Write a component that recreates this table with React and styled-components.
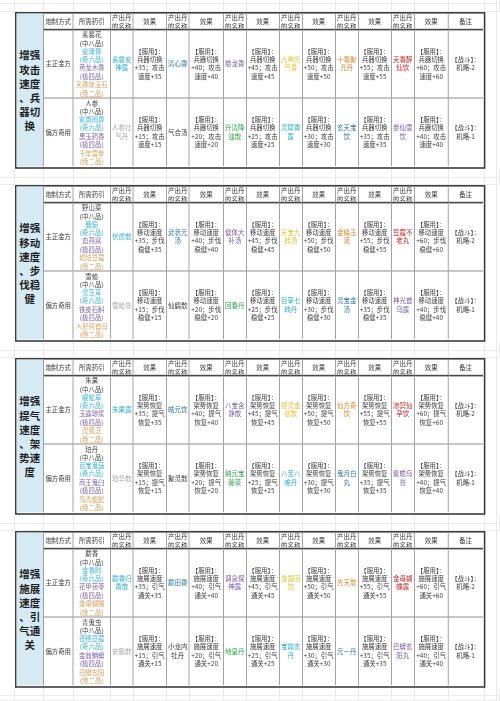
import React from "react";
import styled, { createGlobalStyle } from "styled-components";

const GlobalStyle = createGlobalStyle`
  html, body { margin: 0; padding: 0; background: #ffffff; }
  body { font-family: "Noto Sans CJK SC", "Noto Sans", sans-serif; }
`;

/* The table is laid out at 1.25x and scaled down to 0.8, so that the very small
   text of the reference renders at its true size. */
const K = 1.25;
const OUTER = [29, 30, 37, 23, 33, 23, 34, 23, 33, 23, 33, 23, 33, 23, 34, 36];
const INNER = [27, 30, 37, 23, 33, 23, 34, 23, 33, 23, 33, 23, 33, 23, 34, 34];
const GAP_TEMPLATE = `15px ${OUTER.map((w) => `${w}px`).join(" ")} 12px 1fr`;
const GAP_CELLS = OUTER.length + 3;

const COLORS = {
  dark: "#3a3a3a",
  cyan: "#2aaed3",
  blue: "#2f77b2",
  purple: "#7c58a6",
  yellow: "#e2c637",
  orange: "#e08a30",
  red: "#c61f24",
  gray: "#a9a9a9",
  green: "#2fa64c",
};

const GRADE = [
  { label: "中八品", color: "#3f3f3f" },
  { label: "奇六品", color: "#3bb5dc" },
  { label: "极四品", color: "#8063ab" },
  { label: "绝二品", color: "#d9a05a" },
];

const ROW1_COLORS = ["cyan", "blue", "purple", "yellow", "orange", "red"];
const ROW2_COLORS = ["gray", "dark", "green", "cyan", "blue", "purple"];

const SECTIONS = [
  {
    title: ["增强", "攻击", "速度", "、兵", "器切", "换"],
    effA: "兵器切换",
    effB: ["攻击", "速度"],
    rows: [
      {
        method: "主正金方",
        ingredients: ["素馨花", "安魂香", "黄龙木香", "天香琼玉石"],
        names: ["素馨安神露", "清心香", "慈龙香", "六神元气香", "十香聚元丹", "天香醉仙饮"],
      },
      {
        method: "偏方奇用",
        ingredients: ["人参", "紫香雨香", "黑玉药香", "千年雪参"],
        names: ["人参壮气丹", "气合汤", "升清降浊散", "灵犀香露", "玄天宝饮", "参仙雪饮"],
      },
    ],
  },
  {
    title: ["增强", "移动", "速度", "、步", "伐稳", "健"],
    effA: "移动速度",
    effB: ["步伐", "稳健"],
    rows: [
      {
        method: "主正金方",
        ingredients: ["野山菜", "鹿筋", "血燕窝", "琥珀豆蔻"],
        names: ["伏虎散", "武状元汤", "健体大补汤", "天宝九转汤", "金鳞玉液", "豆蔻不老丸"],
      },
      {
        method: "偏方奇用",
        ingredients: ["雪蛤", "灵芝草", "铁皮石斛", "人形何首乌"],
        names: ["雪蛤膏", "仙鹤散", "回春丹", "百草七转丹", "灵宝金汤", "神光首乌露"],
      },
    ],
  },
  {
    title: ["增强", "提气", "速度", "、架", "势速", "度"],
    effA: "架势恢复",
    effB: ["提气", "恢复"],
    rows: [
      {
        method: "主正金方",
        ingredients: ["朱果", "蜈蚣草", "玉露琼浆", "灵狐芝"],
        names: ["朱果露", "皓元饮", "八宝含静散", "提灵金创散", "仙方奇饮", "凉冥仙孕饮"],
      },
      {
        method: "偏方奇用",
        ingredients: ["珀丹", "百宝鬼菇", "商王鬼臼", "乌青蝮蛇"],
        names: ["珀华散", "聚灵散", "纳元宝脉茶", "八苦八难丹", "鬼月白丸", "紫蟾乌膏"],
      },
    ],
  },
  {
    title: ["增强", "施展", "速度", "、引", "气通", "关"],
    effA: "施展速度",
    effB: ["引气", "通关"],
    rows: [
      {
        method: "主正金方",
        ingredients: ["麝香", "金香附", "花甲茯苓", "金母蝴蝶"],
        names: ["麝香归香散", "麝田香", "调息保神露", "金露回饮", "先天散", "金母蝴蝶露"],
      },
      {
        method: "偏方奇用",
        ingredients: ["青鬼虫", "苍栖豆蔻", "金翁蚺蟒", "巴蟒玄阳"],
        names: ["安髓散", "小龙内牡丹", "地皇丹", "宝鼎玄丹", "元一丹", "巴蟒玄阳丸"],
      },
    ],
  },
];

const Sheet = styled.div`
  position: relative;
  width: 500px;
  height: 701px;
  overflow: hidden;
  display: flex;
  flex-direction: column;
  background: #fff;
`;

const GapBand = styled.div`
  display: grid;
  grid-template-columns: ${GAP_TEMPLATE};
  grid-template-rows: ${(p) => p.$rows};
  flex: none;
`;

const GapCell = styled.div`
  box-sizing: border-box;
  border-right: 1px solid #e9e9e9;
  border-bottom: 1px solid #ececec;
`;

const TableBand = styled.div`
  display: flex;
  flex: none;
`;

const SideMargin = styled.div`
  width: ${(p) => p.$w}px;
  flex: none;
  box-sizing: border-box;
  border-right: ${(p) => (p.$line ? "1px solid #e9e9e9" : "none")};
`;

const TableFrame = styled.div`
  width: 470px;
  height: 157px;
  flex: none;
`;

const Table = styled.div`
  width: ${470 * K}px;
  height: ${157 * K}px;
  box-sizing: border-box;
  border: ${2 * K}px solid #3d3d3d;
  display: grid;
  grid-template-columns: ${INNER.map((w) => `${w * K}px`).join(" ")};
  grid-template-rows: ${17 * K}px ${68 * K}px ${68 * K}px;
  transform: scale(${1 / K});
  transform-origin: 0 0;
`;

const Cell = styled.div`
  box-sizing: border-box;
  display: flex;
  flex-direction: column;
  align-items: center;
  justify-content: center;
  text-align: center;
  overflow: hidden;
  white-space: nowrap;
  font-size: ${6.4 * K}px;
  line-height: ${(p) => (p.$head ? 8.8 * K : 8.4 * K)}px;
  color: #3a3a3a;
  border-right: ${(p) => (p.$last ? "none" : `${K}px solid #8d8d8d`)};
  border-bottom: ${(p) =>
    p.$row === 0
      ? `${2 * K}px solid #474747`
      : p.$row === 1
      ? `${K}px solid #707070`
      : "none"};
`;

const NameCell = styled(Cell)`
  white-space: normal;
  word-break: break-all;
  padding: 0 ${K}px;
  font-size: ${6.5 * K}px;
  color: ${(p) => COLORS[p.$tone]};
`;

const TitleCell = styled.div`
  grid-row: 1 / span 3;
  grid-column: 1;
  box-sizing: border-box;
  background: #d5eaf3;
  border-right: ${K}px solid #8d8d8d;
  display: flex;
  flex-direction: column;
  align-items: center;
  justify-content: center;
  font-size: ${10.5 * K}px;
  line-height: ${14.2 * K}px;
  font-weight: 600;
  color: #1f1f1f;
  padding-top: ${K}px;
`;

const Line = styled.span`
  display: block;
  color: ${(p) => p.$color || "inherit"};
`;

const Watermark = styled.div`
  position: absolute;
  right: 0;
  bottom: 0;
  width: 26px;
  height: 10px;
`;

function GapRows({ rows }) {
  const count = rows.split(" ").length * GAP_CELLS;
  return (
    <GapBand $rows={rows}>
      {Array.from({ length: count }, (_, i) => (
        <GapCell key={i} />
      ))}
    </GapBand>
  );
}

function Section({ data }) {
  const headers = [];
  headers.push(
    <Cell key="h1" $row={0} $head>
      炮制方式
    </Cell>
  );
  headers.push(
    <Cell key="h2" $row={0} $head>
      所需药引
    </Cell>
  );
  for (let i = 0; i < 6; i++) {
    headers.push(
      <Cell key={`hn${i}`} $row={0} $head>
        <Line>产出丹</Line>
        <Line>的名称</Line>
      </Cell>
    );
    headers.push(
      <Cell key={`he${i}`} $row={0} $head>
        效果
      </Cell>
    );
  }
  headers.push(
    <Cell key="hr" $row={0} $head $last>
      备注
    </Cell>
  );

  const bodyRows = data.rows.map((row, r) => {
    const rowIdx = r + 1;
    const tones = r === 0 ? ROW1_COLORS : ROW2_COLORS;
    const base = r === 0 ? 35 : 15;
    const cells = [];
    cells.push(
      <Cell key={`m${r}`} $row={rowIdx}>
        {row.method}
      </Cell>
    );
    cells.push(
      <Cell key={`i${r}`} $row={rowIdx}>
        {row.ingredients.map((ing, k) => (
          <React.Fragment key={k}>
            <Line $color={GRADE[k].color}>{ing}</Line>
            <Line $color={GRADE[k].color}>（{GRADE[k].label}）</Line>
          </React.Fragment>
        ))}
      </Cell>
    );
    row.names.forEach((name, k) => {
      const v = base + k * 5;
      cells.push(
        <NameCell key={`n${r}${k}`} $row={rowIdx} $tone={tones[k]}>
          {name}
        </NameCell>
      );
      cells.push(
        <Cell key={`e${r}${k}`} $row={rowIdx}>
          <Line>【服用】：</Line>
          <Line>{data.effA}</Line>
          <Line>
            +{v}；{data.effB[0]}
          </Line>
          <Line>
            {data.effB[1]}+{v}
          </Line>
        </Cell>
      );
    });
    cells.push(
      <Cell key={`r${r}`} $row={rowIdx} $last>
        <Line>【战斗】：</Line>
        <Line>机略-{r === 0 ? 2 : 1}</Line>
      </Cell>
    );
    return cells;
  });

  return (
    <TableBand>
      <SideMargin $w={15} />
      <TableFrame>
        <Table>
          <TitleCell>
            {data.title.map((t, i) => (
              <Line key={i}>{t}</Line>
            ))}
          </TitleCell>
          {headers}
          {bodyRows}
        </Table>
      </TableFrame>
      <SideMargin $w={12} $line />
    </TableBand>
  );
}

export default function App() {
  return (
    <>
      <GlobalStyle />
      <Sheet>
        <GapRows rows="4px 8px" />
        <Section data={SECTIONS[0]} />
        <GapRows rows="9px 7px" />
        <Section data={SECTIONS[1]} />
        <GapRows rows="9px 7px" />
        <Section data={SECTIONS[2]} />
        <GapRows rows="9px 7px" />
        <Section data={SECTIONS[3]} />
        <GapRows rows="8px 5px" />
        <Watermark>
          <svg width="26" height="10" viewBox="0 0 26 10">
            <ellipse cx="5" cy="6" rx="4" ry="2.2" fill="none" stroke="#f2a31b" strokeWidth="1.3" />
            <path d="M2 4.5 Q6 1.5 9 4" fill="none" stroke="#f7c948" strokeWidth="1" />
            <text x="10" y="8" fontSize="3.6" fill="#8fb6d8" fontFamily="Liberation Sans, sans-serif">
              9game.com
            </text>
          </svg>
        </Watermark>
      </Sheet>
    </>
  );
}
